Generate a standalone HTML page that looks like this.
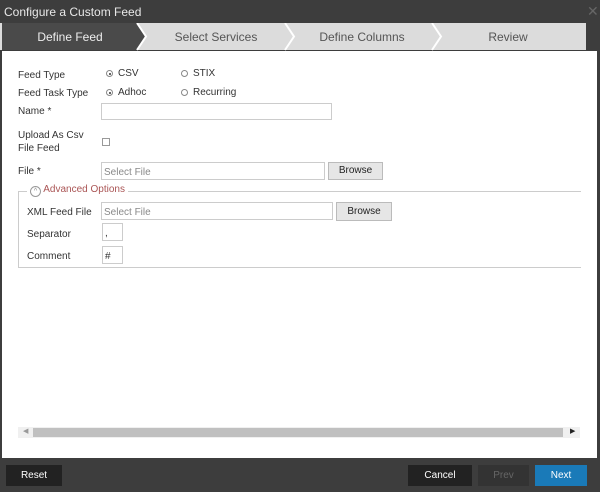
<!DOCTYPE html>
<html><head><style>
body{margin:0;width:600px;height:492px;background:#3d3d3d;font-family:"Liberation Sans",sans-serif;position:relative;overflow:hidden;font-size:10px;color:#333}
.a{position:absolute}
.t{position:absolute;font-size:10px;color:#333}
.in{position:absolute;background:#fff;border:1px solid #ccc;box-sizing:border-box;font-size:10px;color:#888;padding:4px 2px 0}
.btn{position:absolute;background:#e6e6e6;border:1px solid #bbb;box-sizing:border-box;text-align:center;font-size:10px;color:#222;line-height:16px}
.rad{position:absolute;width:7px;height:7px;border:1px solid #888;border-radius:50%;box-sizing:border-box}
.rad.on::after{content:"";position:absolute;left:1.5px;top:1.5px;width:2px;height:2px;background:#333;border-radius:50%}
.fb{position:absolute;font-size:10px;line-height:22px;height:21px;text-align:center;color:#fff}
</style></head><body>
<div class="a" style="left:4px;top:5px;font-size:12px;color:#e8e8e8">Configure a Custom Feed</div>
<div class="a" style="left:587px;top:3px;font-size:14px;color:#666">✕</div>
<div class="a" style="left:2px;top:50px;width:595px;height:408px;background:#fff"></div>
<svg class="a" style="left:0;top:23px" width="600" height="28">
<rect x="0" y="0" width="600" height="28" fill="#3d3d3d"/>
<polygon points="0,0 586,0 586,27 0,27" fill="#dcdcdc"/>
<polygon points="2,0 137,0 146,13.5 137,27 2,27" fill="#4a4a4a"/>
<polyline points="137,0 146,13.5 137,27" fill="none" stroke="#fff" stroke-width="2"/>
<polyline points="285,0 294,13.5 285,27" fill="none" stroke="#fff" stroke-width="2"/>
<polyline points="432,0 441,13.5 432,27" fill="none" stroke="#fff" stroke-width="2"/>
<text x="70" y="18" fill="#eee" font-size="12" text-anchor="middle" font-family="Liberation Sans">Define Feed</text>
<text x="216" y="18" fill="#555" font-size="12" text-anchor="middle" font-family="Liberation Sans">Select Services</text>
<text x="362" y="18" fill="#555" font-size="12" text-anchor="middle" font-family="Liberation Sans">Define Columns</text>
<text x="508" y="18" fill="#555" font-size="12" text-anchor="middle" font-family="Liberation Sans">Review</text>
</svg>
<div class="t" style="left:18px;top:70px">Feed Type</div>
<div class="rad on" style="left:106px;top:70px"></div><div class="t" style="left:118px;top:68px">CSV</div>
<div class="rad" style="left:181px;top:70px"></div><div class="t" style="left:193px;top:68px">STIX</div>
<div class="t" style="left:18px;top:88px">Feed Task Type</div>
<div class="rad on" style="left:106px;top:89px"></div><div class="t" style="left:118px;top:87px">Adhoc</div>
<div class="rad" style="left:181px;top:89px"></div><div class="t" style="left:193px;top:87px">Recurring</div>
<div class="t" style="left:18px;top:106px">Name *</div>
<div class="in" style="left:101px;top:103px;width:231px;height:17px"></div>
<div class="t" style="left:18px;top:129px;line-height:13px">Upload As Csv<br>File Feed</div>
<div class="a" style="left:102px;top:138px;width:8px;height:8px;border:1px solid #999;box-sizing:border-box"></div>
<div class="t" style="left:18px;top:166px">File *</div>
<div class="in" style="left:101px;top:162px;width:224px;height:18px">Select File</div>
<div class="btn" style="left:328px;top:162px;width:55px;height:18px">Browse</div>
<div class="a" style="left:18px;top:191px;width:563px;height:77px;border:1px solid #ccc;border-right:none;box-sizing:border-box"></div>
<div class="a" style="left:27px;top:184px;background:#fff;padding:0 3px;color:#a55;font-size:10px"><span style="display:inline-block;width:9px;height:9px;border:1px solid #999;border-radius:50%;font-size:7px;line-height:9px;text-align:center;color:#888;vertical-align:-1px">^</span> Advanced Options</div>
<div class="t" style="left:27px;top:207px">XML Feed File</div>
<div class="in" style="left:101px;top:202px;width:232px;height:18px">Select File</div>
<div class="btn" style="left:336px;top:202px;width:56px;height:19px;line-height:17px">Browse</div>
<div class="t" style="left:27px;top:229px">Separator</div>
<div class="in" style="left:102px;top:223px;width:21px;height:18px;color:#333">,</div>
<div class="t" style="left:27px;top:251px">Comment</div>
<div class="in" style="left:102px;top:246px;width:21px;height:18px;color:#333">#</div>
<div class="a" style="left:18px;top:427px;width:562px;height:11px;background:#f0f0f0"></div>
<div class="a" style="left:33px;top:428px;width:530px;height:9px;background:#c0c0c0"></div>
<div class="a" style="left:23px;top:427px;font-size:7px;color:#999">◀</div>
<div class="a" style="left:570px;top:427px;font-size:7px;color:#222">▶</div>
<div class="fb" style="left:6px;top:465px;width:56px;background:#222">Reset</div>
<div class="fb" style="left:408px;top:465px;width:64px;background:#222">Cancel</div>
<div class="fb" style="left:478px;top:465px;width:51px;background:#333;color:#666">Prev</div>
<div class="fb" style="left:535px;top:465px;width:52px;background:#1a7ab8">Next</div>
</body></html>
